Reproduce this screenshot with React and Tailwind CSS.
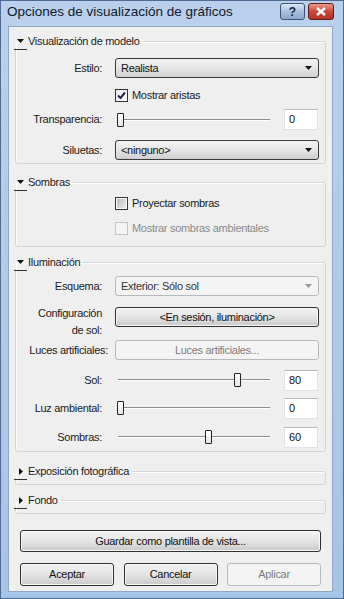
// App.jsx — Windows 7 style "Opciones de visualización de gráficos" dialog

const font = { fontFamily: '"Liberation Sans", Arial, sans-serif' }

function Arrow({ open }) {
  return (
    <span className="relative inline-flex w-[13px] h-[13px] items-center justify-center mr-[1px]">
      {open ? (
        <svg width="7" height="4" viewBox="0 0 7 4"><path d="M0 0h7L3.5 4z" fill="#111" /></svg>
      ) : (
        <svg width="4" height="7" viewBox="0 0 4 7"><path d="M0 0v7l4-3.5z" fill="#111" /></svg>
      )}
      <span className="absolute left-0 bottom-[-2px] w-[13px] h-[1px] bg-[#333]" />
    </span>
  )
}

function Group({ title, open = true, className = '', children }) {
  return (
    <fieldset className={`border border-[#d0d7dc] rounded-[3px] mx-[6px] shadow-[inset_1px_1px_0_#fff] ${className}`}>
      <legend className="-ml-[2px] h-[14px] flex items-center pr-[3px] text-[11px] tracking-[-0.3px] text-[#1a1a1a] leading-none">
        <Arrow open={open} />
        {title}
      </legend>
      {children}
    </fieldset>
  )
}

function Label({ children, w = 'w-[86px]' }) {
  return (
    <div className={`${w} text-right text-[11px] tracking-[-0.3px] text-[#1a1a1a] shrink-0 whitespace-nowrap`}>
      {children}
    </div>
  )
}

function Combo({ value, disabled }) {
  return (
    <div
      className={`ml-[13px] w-[204px] h-[20px] rounded-[3px] flex items-center justify-between pl-[5px] pr-[6px] text-[11px] tracking-[-0.3px] ${
        disabled
          ? 'border border-[#b5b9bc] bg-[#f4f4f4] text-[#333]'
          : 'border border-[#3a3a3a] bg-gradient-to-b from-[#f4f4f4] via-[#e6e6e6] to-[#cfcfcf] text-[#111]'
      }`}
    >
      <span>{value}</span>
      <svg width="7" height="4" viewBox="0 0 7 4"><path d="M0 0h7L3.5 4z" fill={disabled ? '#999' : '#111'} /></svg>
    </div>
  )
}

function Check({ checked, disabled, label }) {
  return (
    <div className="flex items-center">
      <span
        className={`w-[13px] h-[13px] flex items-center justify-center border ${
          disabled
            ? 'border-[#c4c4c4] bg-[#f4f4f4]'
            : checked
            ? 'border-[#333] bg-gradient-to-br from-[#e8e8e8] to-[#fff]'
            : 'border-[#333] bg-gradient-to-br from-[#b8b8b8] to-[#f0f0f0] shadow-[inset_0_0_0_1px_#fff]'
        }`}
      >
        {checked && (
          <svg width="9" height="9" viewBox="0 0 9 9">
            <path d="M1 4.5l2.5 2.5L8 1.5" stroke="#1b2a4a" strokeWidth="2" fill="none" />
          </svg>
        )}
      </span>
      <span className={`ml-[4px] text-[11px] tracking-[-0.3px] ${disabled ? 'text-[#8a8a8a]' : 'text-[#1a1a1a]'}`}>{label}</span>
    </div>
  )
}

function Slider({ value }) {
  return (
    <div className="relative ml-[13px] w-[158px] h-[20px] flex items-center">
      <div className="ml-[3px] w-[152px] h-[2px] border-t border-[#8e8e8e] border-b border-b-white" />
      <div
        className="absolute top-[3px] w-[7px] h-[14px] border border-[#222] rounded-[1px] bg-gradient-to-b from-white to-[#e4e4e4]"
        style={{ left: 2 + value * 1.46 }}
      />
    </div>
  )
}

function NumBox({ value }) {
  return (
    <div className="ml-[11px] w-[34px] h-[21px] bg-white border border-[#dde3e8] border-t-[#b4b8bd] flex items-center pl-[4px] text-[11px] text-[#111]">
      {value}
    </div>
  )
}

function Btn({ children, disabled, className = '' }) {
  return (
    <div
      className={`rounded-[3px] flex items-center justify-center text-[11px] tracking-[-0.3px] ${
        disabled
          ? 'border border-[#b5b9bc] bg-[#f4f4f4] text-[#7c7c7c]'
          : 'border border-[#2f2f2f] bg-gradient-to-b from-[#f4f4f4] via-[#e4e4e4] to-[#c9c9c9] text-[#111] shadow-[inset_0_0_0_1px_#f8f8f8]'
      } ${className}`}
    >
      {children}
    </div>
  )
}

export default function App() {
  return (
    <div style={font} className="w-[344px] h-[599px] bg-gradient-to-b from-[#b9d1ec] to-[#a8c4e6] border border-[#4d6d94] flex flex-col overflow-hidden">
      {/* title bar */}
      <div className="h-[25px] flex items-center justify-between pl-[6px] pr-[9px] shrink-0">
        <span className="text-[13.5px] text-[#10182a] -mt-[3px]">Opciones de visualización de gráficos</span>
        <div className="flex gap-[3px] -mt-[4px]">
          <div className="w-[25px] h-[17px] rounded-[3px] border border-[#3d5573] bg-gradient-to-b from-[#d9e6f5] via-[#a9c1de] to-[#8ba8cc] flex items-center justify-center text-[12px] font-bold text-[#1b2a40]">
            ?
          </div>
          <div className="w-[26px] h-[17px] rounded-[3px] border border-[#5c1d1d] bg-gradient-to-b from-[#e59a8c] via-[#c9483a] to-[#b33124] flex items-center justify-center">
            <svg width="10" height="9" viewBox="0 0 10 9">
              <path d="M1 1l8 7M9 1L1 8" stroke="#fff" strokeWidth="2.4" />
            </svg>
          </div>
        </div>
      </div>

      {/* client area */}
      <div className="ml-[7px] mr-[10px] mb-[6px] flex-1 bg-[#efefef] border border-[#8ea7c4] pt-[7px] flex flex-col">
        <Group title="Visualización de modelo" className="pb-[3px]">
          <div className="mt-[10px] h-[20px] flex items-center">
            <Label>Estilo:</Label>
            <Combo value="Realista" />
          </div>
          <div className="mt-[7px] h-[20px] flex items-center pl-[99px]">
            <Check checked label="Mostrar aristas" />
          </div>
          <div className="mt-[4px] h-[21px] flex items-center">
            <Label>Transparencia:</Label>
            <Slider value={0} />
            <NumBox value="0" />
          </div>
          <div className="mt-[10px] h-[20px] flex items-center">
            <Label>Siluetas:</Label>
            <Combo value="<ninguno>" />
          </div>
        </Group>

        <Group title="Sombras" className="mt-[11px] pb-[8px]">
          <div className="mt-[4px] h-[20px] flex items-center pl-[99px]">
            <Check label="Proyectar sombras" />
          </div>
          <div className="mt-[5px] h-[20px] flex items-center pl-[99px]">
            <Check disabled label="Mostrar sombras ambientales" />
          </div>
        </Group>

        <Group title="Iluminación" className="mt-[8px] pb-[4px]">
          <div className="mt-[7px] h-[20px] flex items-center">
            <Label>Esquema:</Label>
            <Combo value="Exterior: Sólo sol" disabled />
          </div>
          <div className="mt-[9px] flex items-start">
            <Label>
              <div className="leading-[17px]">Configuración</div>
              <div className="leading-[17px]">de sol:</div>
            </Label>
            <Btn className="ml-[13px] mt-[2px] w-[204px] h-[20px]">&lt;En sesión, iluminación&gt;</Btn>
          </div>
          <div className="mt-[1px] h-[20px] flex items-center">
            <Label w="w-[92px]">Luces artificiales:</Label>
            <Btn disabled className="ml-[7px] w-[204px] h-[20px]">Luces artificiales...</Btn>
          </div>
          <div className="mt-[10px] h-[20px] flex items-center">
            <Label>Sol:</Label>
            <Slider value={80} />
            <NumBox value="80" />
          </div>
          <div className="mt-[8px] h-[20px] flex items-center">
            <Label>Luz ambiental:</Label>
            <Slider value={0} />
            <NumBox value="0" />
          </div>
          <div className="mt-[9px] h-[20px] flex items-center">
            <Label>Sombras:</Label>
            <Slider value={60} />
            <NumBox value="60" />
          </div>
        </Group>

        <Group title="Exposición fotográfica" open={false} className="mt-[12px]">
          <div className="h-[6px]" />
        </Group>
        <Group title="Fondo" open={false} className="mt-[8px]">
          <div className="h-[6px]" />
        </Group>

        <div className="px-[11px] mt-[16px]">
          <Btn className="h-[22px] w-full">Guardar como plantilla de vista...</Btn>
        </div>
        <div className="px-[11px] mt-[11px] flex justify-between">
          <Btn className="h-[23px] w-[94px]">Aceptar</Btn>
          <Btn className="h-[23px] w-[94px]">Cancelar</Btn>
          <Btn disabled className="h-[23px] w-[94px]">Aplicar</Btn>
        </div>
      </div>
    </div>
  )
}
